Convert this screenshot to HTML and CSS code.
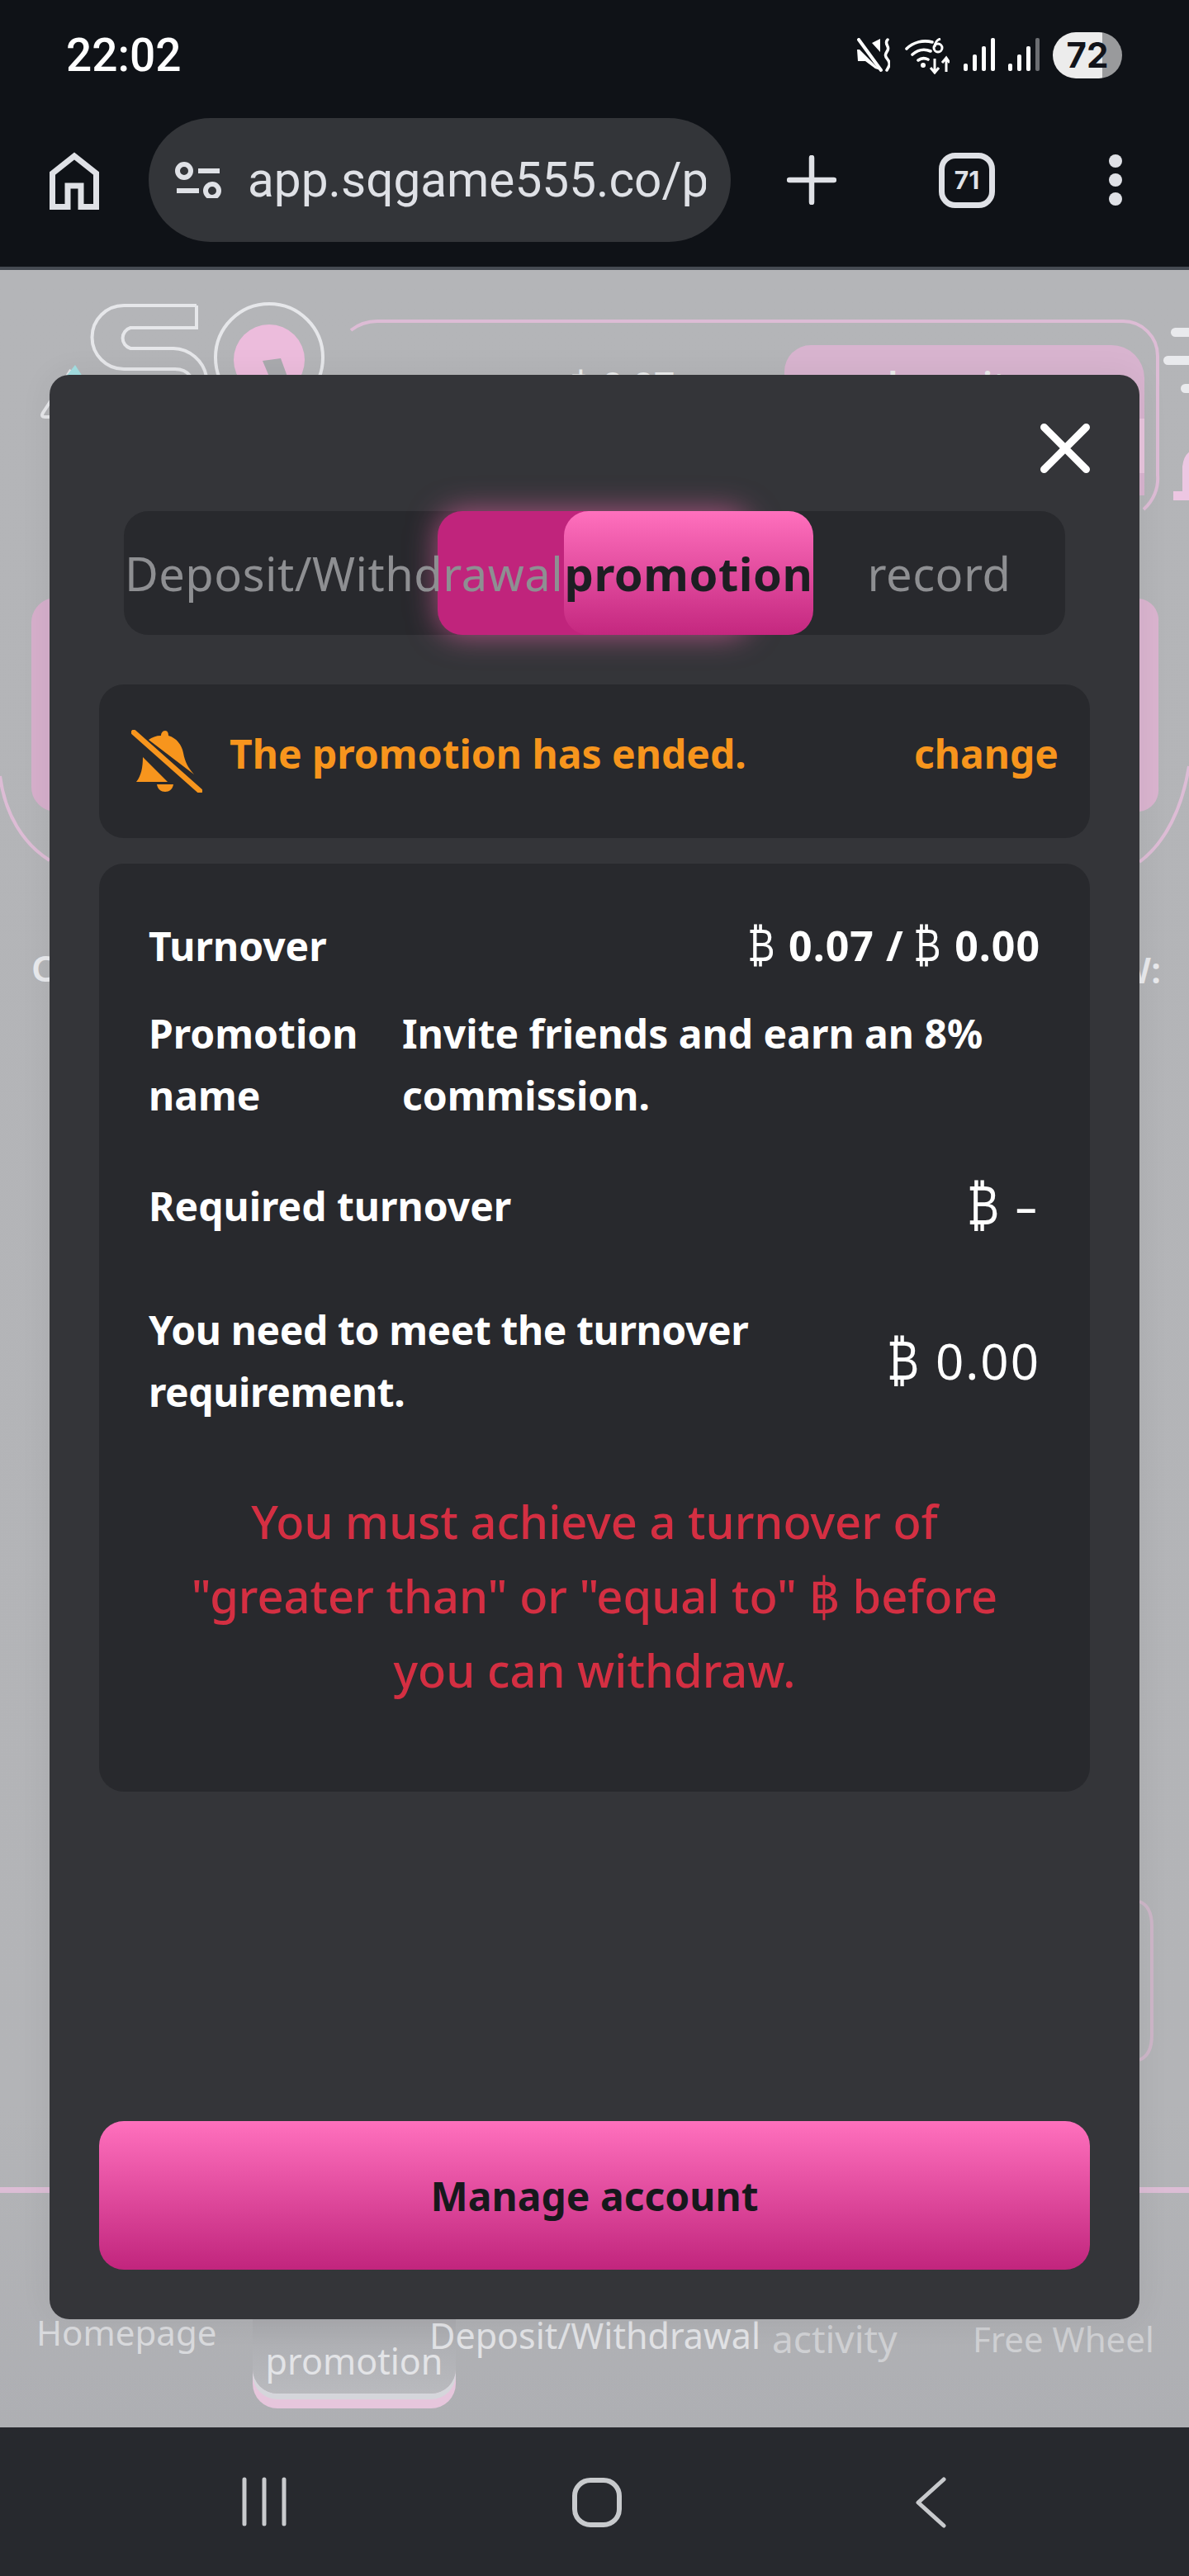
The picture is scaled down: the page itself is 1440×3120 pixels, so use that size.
FILE: index.html
```html
<!DOCTYPE html>
<html lang="en">
<head>
    <meta charset="UTF-8">
    <meta name="viewport" content="width=device-width, initial-scale=1.0">
    <title>Promotion</title>
    <link rel="stylesheet" href="styles.css">
</head>
<body>
    <div class="top-chrome">
        <div class="status-bar">
            <span class="clock">22:02</span>
            <div class="status-icons">
                <svg width="40" height="42" viewBox="0 0 40 42">
                    <path d="M18 6L28 1V17zM0 14H3L28 39 22 37 10 28H1z" fill="#fff"/>
                    <path d="M2 2L29 39" stroke="#fff" stroke-width="4" stroke-linecap="round"/>
                    <path d="M37 2c-5 5 3 8 0 13s-4 6 0 11 2 8-1 13" fill="none" stroke="#fff" stroke-width="3.5" stroke-linecap="round"/>
                </svg>
                <svg class="wifi-icon" width="54" height="44" viewBox="0 0 54 44">
                    <path d="M2 13C10 5 22 2 33 5M9 20c7-6 15-7 22-4M16 27c4-3 8-3 12-1" fill="none" stroke="#fff" stroke-width="3.6" stroke-linecap="round"/>
                    <circle cx="22" cy="33" r="3" fill="#fff"/>
                    <circle cx="40" cy="12" r="5" fill="none" stroke="#fff" stroke-width="3"/>
                    <path d="M36 11c0-5 3-9 7-10" fill="none" stroke="#fff" stroke-width="3"/>
                    <path d="M36 25v16m-5-5l5 6 5-6M50 41V25m-5 5l5-6 4 6" fill="none" stroke="#fff" stroke-width="3"/>
                </svg>
                <svg class="signal-icon" width="38" height="40" viewBox="0 0 38 40">
                    <g fill="#fff"><rect x="0" y="31" width="5" height="9" rx="2"/><rect x="11" y="20" width="5" height="20" rx="2"/><rect x="22" y="10" width="5" height="30" rx="2"/><rect x="33" y="0" width="5" height="40" rx="2"/></g>
                </svg>
                <svg class="signal-icon" width="38" height="40" viewBox="0 0 38 40">
                    <g fill="#fff"><rect x="0" y="31" width="5" height="9" rx="2"/><rect x="11" y="20" width="5" height="20" rx="2"/><rect x="22" y="10" width="5" height="30" rx="2"/><rect x="33" y="0" width="5" height="40" rx="2" fill="#6c6e72"/></g>
                </svg>
                <span class="battery">72</span>
            </div>
        </div>
        <div class="browser-bar">
            <svg class="home-icon" width="60" height="70" viewBox="0 0 60 70">
                <path d="M3.5 26L30 5l26.500 21v40.500H38V41H22v25.500H3.500z" fill="none" stroke="#dfe1e6" stroke-width="7"/>
            </svg>
            <div class="url-pill">
                <svg width="58" height="44" viewBox="0 0 58 44">
                    <circle cx="11" cy="11" r="8" fill="none" stroke="#dfe1e6" stroke-width="6"/>
                    <rect x="28" y="8" width="26" height="6" fill="#dfe1e6"/>
                    <rect x="2" y="32" width="27" height="6" fill="#dfe1e6"/>
                    <circle cx="45" cy="35" r="8" fill="none" stroke="#dfe1e6" stroke-width="6"/>
                </svg>
                <span class="url-text">app.sqgame555.co/p</span>
            </div>
            <svg class="plus-icon" width="60" height="60" viewBox="0 0 60 60">
                <path d="M30 3v54M3 30h54" stroke="#dfe1e6" stroke-width="6.500" stroke-linecap="round"/>
            </svg>
            <span class="tab-count">71</span>
            <div class="menu-dots"><i></i><i></i><i></i></div>
        </div>
    </div>

    <div class="page">
        <svg class="backdrop" viewBox="0 327 1440 2613">
            <g fill="none" stroke="#e6e7ea" stroke-width="4">
                <path d="M238 370V397H158a13 13 0 0 0 0 25H210a42 42 0 0 1 40 34"/>
                <path d="M238 370H150a38 38 0 0 0 0 77H212q12 0 18 8"/>
                <circle cx="326" cy="433" r="65"/>
                <path d="M86 448L52 500q-3 5 3 5H70"/>
            </g>
            <circle cx="326" cy="436" r="43" fill="#ecbcdc"/>
            <path d="M318 437L340 434L348 456H326z" fill="#a9aaae"/>
            <path d="M91 442L100 456H80z" fill="#a4dfe2"/>
            <g fill="none" stroke="#ddbcd5" stroke-width="4">
                <path d="M425 400q14-11 32-11H1360a42 42 0 0 1 42 42V575a50 50 0 0 1-17 42"/>
                <path d="M0 940c6 46 28 82 60 102"/>
                <path d="M1440 928c-8 50-28 92-60 116"/>
            </g>
            <path d="M950 454V450a32 32 0 0 1 32-32H1346a40 40 0 0 1 40 40V600H950z" fill="#d8b4cf"/>
            <rect x="1380" y="507" width="6" height="66" fill="#e8c4dd"/>
            <text class="backdrop-amount" x="690" y="482">&#3647; 0.07</text>
            <text class="backdrop-amount" x="1060" y="482">deposit</text>
            <g fill="#e9eaed">
                <rect x="1418" y="397" width="40" height="11" rx="5.500"/>
                <rect x="1409" y="431" width="50" height="11" rx="5.500"/>
                <rect x="1430" y="465" width="30" height="11" rx="5.500"/>
            </g>
            <path d="M1421 606V595H1432V565Q1434 546 1450 543V606z" fill="#edc6e2"/>
            <path d="M60 725a30 30 0 0 0-22 30V952a30 30 0 0 0 22 30z" fill="#d6afcb"/>
            <path d="M1380 725a26 26 0 0 1 23 28V955a26 26 0 0 1-23 28z" fill="#dab4cf"/>
            <text class="backdrop-word" x="38" y="1189">C</text>
            <text class="backdrop-word" x="1352" y="1191">W:</text>
            <path d="M1380 2303q15 6 15 30V2465q0 24-15 30" fill="none" stroke="#cdb6c8" stroke-width="4"/>
            <rect x="0" y="2649" width="1440" height="7" fill="#dcbdd5"/>
        </svg>

        <nav class="site-nav">
            <span class="nav-label nav-home">Homepage</span>
            <span class="nav-tab"><span class="nav-tab-text">promotion</span></span>
            <span class="nav-label nav-deposit">Deposit/Withdrawal</span>
            <span class="nav-label nav-activity">activity</span>
            <span class="nav-label nav-wheel">Free Wheel</span>
        </nav>

        <div class="modal">
            <div class="modal-head">
                <svg width="60" height="60" viewBox="0 0 60 60">
                    <path d="M4.500 4.500l51 51M55.500 4.500l-51 51" stroke="#fff" stroke-width="9" stroke-linecap="round"/>
                </svg>
            </div>

            <div class="tabs">
                <div class="tab-slider"></div>
                <div class="tab tab-deposit">Deposit/Withdrawal</div>
                <div class="tab tab-active">promotion</div>
                <div class="tab tab-record">record</div>
            </div>

            <div class="notice">
                <svg width="86" height="76" viewBox="0 0 86 76">
                    <path d="M41 1c3 0 4 3 4 6 10 3 16 11 18 21 2 11 6 18 13 26L21 12c4-3 9-5 15-5 0-3 2-6 5-6z" fill="#f7951d"/>
                    <path d="M14 33l30 30H6c6-7 8-18 8-30z" fill="#f7951d"/>
                    <path d="M31 66h20c-1 6-5 9-10 9s-9-3-10-9z" fill="#f7951d"/>
                    <path d="M3 3l80 71" stroke="#f7951d" stroke-width="6.500" stroke-linecap="round"/>
                </svg>
                <span class="notice-text">The promotion has ended.</span>
                <span class="notice-link">change</span>
            </div>

            <div class="details">
                <div class="row row-turnover">
                    <span class="label">Turnover</span>
                    <span class="amount amount-bold"><i class="baht">&#8383;</i> 0.07 / <i class="baht">&#8383;</i> 0.00</span>
                </div>
                <div class="row row-promo">
                    <span class="label label-name">Promotion name</span>
                    <span class="label promo-value">Invite friends and earn an 8% commission.</span>
                </div>
                <div class="row row-required">
                    <span class="label">Required turnover</span>
                    <span class="amount amount-big"><i class="baht">&#8383;</i> <i class="dash">-</i></span>
                </div>
                <div class="row row-need">
                    <span class="label label-need">You need to meet the turnover requirement.</span>
                    <span class="amount amount-big"><i class="baht">&#8383;</i> 0.00</span>
                </div>
                <p class="warning">You must achieve a turnover of<br>"greater than" or "equal to" <span class="baht-inline">&#3647;</span> before<br>you can withdraw.</p>
            </div>

            <button class="manage-btn">Manage account</button>
        </div>
    </div>

    <div class="system-nav">
        <svg width="54" height="60" viewBox="0 0 54 60">
            <path d="M3 3v54M27 3v54M51 3v54" stroke="#c8cacd" stroke-width="5" stroke-linecap="round"/>
        </svg>
        <svg width="62" height="62" viewBox="0 0 62 62">
            <rect x="4" y="4" width="54" height="54" rx="19" fill="none" stroke="#c8cacd" stroke-width="6"/>
        </svg>
        <svg width="40" height="62" viewBox="0 0 40 62">
            <path d="M35 3L4 31l31 28" fill="none" stroke="#c8cacd" stroke-width="5" stroke-linecap="round" stroke-linejoin="round"/>
        </svg>
    </div>
</body>
</html>
```
FILE: styles.css
```css
*{
    margin: 0;
    padding: 0;
    box-sizing: border-box;
}
html,body{
    width: 1440px;
    height: 3120px;
    overflow: hidden;
}
body{
    font-family: "Noto Sans", "DejaVu Sans", sans-serif;
    background-color: #b3b4b7;
}

/* phone + browser chrome */
.top-chrome{
    height: 327px;
    background-color: #0f1217;
    border-bottom: 4px solid #454a52;
    color: #dfe1e6;
}
.status-bar{
    height: 143px;
    padding: 39px 81px 0 80px;
    display: flex;
    justify-content: space-between;
    align-items: flex-start;
}
.clock{
    font-family: Roboto, sans-serif;
    font-size: 55px;
    font-weight: 500;
    line-height: 56px;
    color: #fff;
}
.status-icons{
    display: flex;
    align-items: flex-start;
}
.status-icons svg{
    margin-top: 7px;
}
.wifi-icon{
    margin-left: 18px;
}
.signal-icon{
    margin-left: 17px;
}
.signal-icon + .signal-icon{
    margin-left: 16px;
}
.battery{
    margin-left: 16px;
    width: 84px;
    height: 56px;
    border-radius: 28px;
    background: linear-gradient(90deg, #ececec 71%, #999a9c 71%);
    color: #12141a;
    font-family: Inter, sans-serif;
    font-size: 42px;
    font-weight: 700;
    line-height: 56px;
    text-align: center;
}
.browser-bar{
    height: 150px;
    padding-left: 60px;
    display: flex;
    align-items: center;
}
.home-icon{
    margin-top: 2px;
}
.url-pill{
    margin-left: 60px;
    width: 705px;
    height: 150px;
    padding: 0 30px 0 32px;
    border-radius: 75px;
    background-color: #333539;
    display: flex;
    align-items: center;
    overflow: hidden;
}
.url-text{
    margin-left: 30px;
    width: 555px;
    overflow: hidden;
    white-space: nowrap;
    font-family: Roboto, sans-serif;
    font-size: 58.5px;
    color: #dfe1e6;
}
.plus-icon{
    margin-left: 68px;
}
.tab-count{
    margin-left: 124px;
    width: 68px;
    height: 67px;
    border: 7px solid #dfe1e6;
    border-radius: 20px;
    font-family: Inter, sans-serif;
    font-size: 30px;
    font-weight: 700;
    line-height: 53px;
    text-align: center;
}
.menu-dots{
    margin-left: 138px;
    display: flex;
    flex-direction: column;
    gap: 7px;
}
.menu-dots i{
    width: 16px;
    height: 16px;
    border-radius: 50%;
    background-color: #dfe1e6;
}

/* dimmed page behind the dialog */
.page{
    position: relative;
    height: 2613px;
    display: flex;
    flex-direction: column;
    justify-content: flex-end;
    background: linear-gradient(180deg, #b4b5b8 0%, #b3b4b7 85%, #aeafb3 100%);
    overflow: hidden;
}
.backdrop{
    position: absolute;
    left: 0;
    top: 0;
    width: 1440px;
    height: 2613px;
}
.backdrop-amount{
    font-family: "Noto Sans", sans-serif;
    font-size: 44px;
    font-weight: 600;
    fill: #eceded;
}
.backdrop-word{
    font-family: "Noto Sans", sans-serif;
    font-size: 44px;
    font-weight: 600;
    fill: #e9eaed;
}
.site-nav{
    position: relative;
    height: 135px;
    display: grid;
    grid-template-columns: 306px 214px 415px 243px 262px;
    align-items: start;
    font-size: 42px;
    color: #d9dadd;
}
.nav-label{
    line-height: 48px;
    white-space: nowrap;
}
.nav-home{
    margin-top: -4px;
    padding-left: 44px;
}
.nav-deposit{
    margin-top: 0;
    font-size: 43px;
    color: #e1e2e5;
}
.nav-activity{
    margin-top: 3px;
    font-size: 46px;
    color: #cfd0d3;
}
.nav-wheel{
    margin-top: 4px;
    color: #cfd0d3;
}
.nav-tab{
    width: 246px;
    height: 94px;
    border-radius: 0 0 30px 30px;
    background: linear-gradient(180deg, #a9aaae, #b9babe);
    box-shadow: 0 7px 0 #d5d6db, 0 18px 0 #e6c6dc;
    text-align: center;
    font-size: 43px;
}
.nav-tab-text{
    display: block;
    padding-top: 31px;
    line-height: 48px;
    color: #e3e4e7;
}

/* dialog */
.modal{
    position: absolute;
    left: 60px;
    top: 127px;
    width: 1320px;
    height: 2355px;
    padding: 59px 60px 60px;
    border-radius: 24px;
    background-color: #343539;
    box-shadow: 0 0 40px rgba(0, 0, 0, 0.06);
    display: flex;
    flex-direction: column;
}
.modal-head{
    height: 61px;
    display: flex;
    justify-content: flex-end;
}
.tabs{
    position: relative;
    margin: 45px 30px 0;
    height: 150px;
    border-radius: 30px;
    background-color: #28292d;
    display: flex;
    align-items: center;
    font-size: 56px;
    letter-spacing: 0.5px;
    color: #8e8f92;
}
.tab-slider{
    position: absolute;
    left: 380px;
    top: 0;
    width: 380px;
    height: 150px;
    border-radius: 30px;
    background-color: #c0247c;
    box-shadow: 0 0 36px rgba(255, 105, 180, 0.6);
}
.tab{
    position: relative;
    line-height: 150px;
    text-align: center;
    white-space: nowrap;
}
.tab-deposit{
    width: 533px;
}
.tab-active{
    width: 302px;
    border-radius: 30px;
    background: linear-gradient(180deg, #ff70bd, #c4277f);
    color: #1d1e22;
    font-weight: 700;
}
.tab-record{
    width: 305px;
}

.notice{
    margin-top: 60px;
    height: 186px;
    padding: 0 38px 0 39px;
    border-radius: 30px;
    background-color: #28292d;
    display: flex;
    align-items: center;
    font-size: 48px;
    font-weight: 700;
    color: #f7951d;
}
.notice-text{
    margin: 0 0 20px 33px;
}
.notice-link{
    margin: 0 0 20px auto;
}

.details{
    margin-top: 31px;
    height: 1124px;
    padding: 0 60px;
    border-radius: 30px;
    background-color: #28292d;
    color: #fff;
    font-size: 48px;
    font-weight: 700;
}
.row{
    display: flex;
    justify-content: space-between;
    line-height: 75px;
}
.row-turnover{
    padding-top: 62px;
}
.row-promo{
    padding-top: 31px;
    justify-content: flex-start;
}
.label-name{
    width: 307px;
}
.promo-value{
    width: 760px;
}
.row-required{
    padding-top: 59px;
}
.row-need{
    padding-top: 75px;
    align-items: center;
}
.label-need{
    width: 800px;
    letter-spacing: -0.4px;
}
.amount{
    white-space: nowrap;
}
.amount-bold{
    font-size: 50px;
    letter-spacing: 1px;
}
.amount-bold .baht{
    font-size: 56px;
    letter-spacing: 0;
    margin-left: -7px;
    margin-right: -1px;
}
.amount-big{
    font-size: 60px;
    font-weight: 400;
    letter-spacing: 2px;
}
.amount-big .baht{
    font-size: 66px;
    letter-spacing: 0;
    margin-left: -8px;
    margin-right: -2px;
}
.baht{
    display: inline-block;
    font-family: "DejaVu Sans", sans-serif;
    font-style: normal;
    font-weight: 400;
    line-height: 1;
    transform: scaleX(0.8);
}
.dash{
    display: inline-block;
    margin-left: 8px;
    font-style: normal;
    transform: scaleX(1.5);
    transform-origin: right center;
}
.warning{
    margin-top: 74px;
    text-align: center;
    font-size: 56px;
    font-weight: 500;
    line-height: 90px;
    color: #d42f42;
}
.baht-inline{
    font-family: "DejaVu Sans", sans-serif;
    font-size: 60px;
    font-weight: 400;
    line-height: 1;
}
.manage-btn{
    margin-top: auto;
    height: 180px;
    border: none;
    border-radius: 30px;
    background: linear-gradient(180deg, #ff70bd, #c1257d);
    color: #17181c;
    font-family: inherit;
    font-size: 48px;
    font-weight: 700;
}

.system-nav{
    height: 180px;
    background-color: #27292e;
    padding: 60px 0 0 293px;
    display: flex;
    align-items: flex-start;
}
.system-nav svg:nth-child(2){
    margin-left: 345px;
}
.system-nav svg:nth-child(3){
    margin-left: 354px;
}
```
